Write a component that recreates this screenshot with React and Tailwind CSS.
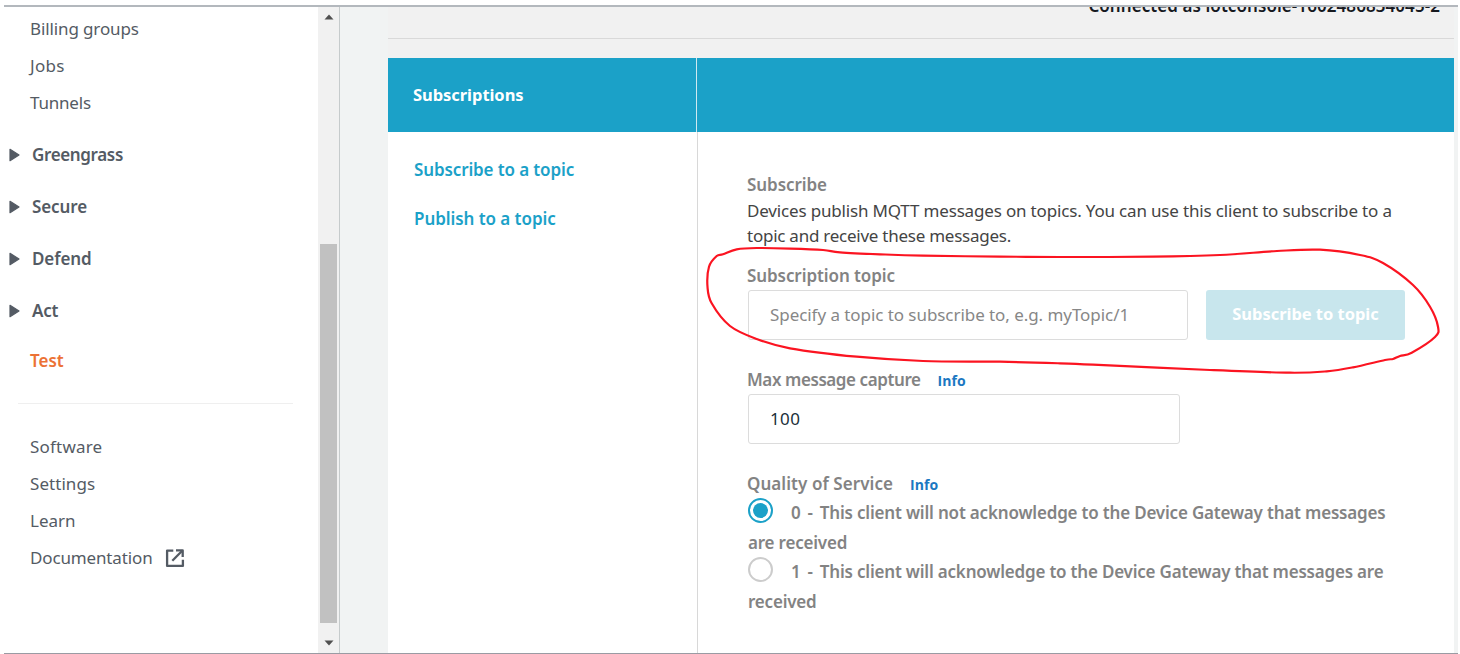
import React from "react";

const devices = [
  ["Billing groups", "tracking-[-0.12px]"],
  ["Jobs", "tracking-[0.26px]"],
  ["Tunnels", "tracking-[-0.2px]"],
];

const groups = [
  ["Greengrass", "tracking-[-0.36px]"],
  ["Secure", "tracking-[-0.1px]"],
  ["Defend", "tracking-[-0.1px]"],
  ["Act", "tracking-[-0.2px]"],
];

const links = [
  ["Software", "tracking-[0.2px]"],
  ["Settings", "tracking-[0.05px]"],
  ["Learn", "tracking-[0px]"],
  ["Documentation", "tracking-[-0.14px]"],
];

const stroke = [
  [756.7, 248], [790, 248.6], [823, 250], [840, 252.3], [880, 254.3], [923, 255.7], [1000, 256.6], [1060, 257],
  [1153, 256.7], [1220, 255], [1277, 251], [1320, 249.7], [1360, 255], [1383, 263], [1413, 285],
  [1430, 306.7], [1438, 326.7], [1435, 337], [1411.7, 352.7], [1400, 356], [1393, 359], [1385, 360],
  [1353, 367.3], [1326.7, 371.3], [1290, 372.7], [1210, 370], [1093, 364.7], [1060, 363.3],
  [1000, 361.7], [923, 361], [856.7, 356.7], [790, 348.3], [756.7, 339], [730, 326], [711.7, 303.3],
  [707.5, 286.7], [709, 266.7], [716.7, 256], [723, 254.3], [736.7, 249.3],
];

// Closed Catmull-Rom curve through the points, as cubic Béziers.
function smooth(pts) {
  const n = pts.length;
  let d = `M${pts[0][0]} ${pts[0][1]}`;
  for (let i = 0; i < n; i++) {
    const a = pts[(i - 1 + n) % n], b = pts[i], c = pts[(i + 1) % n], e = pts[(i + 2) % n];
    d += `C${b[0] + (c[0] - a[0]) / 6} ${b[1] + (c[1] - a[1]) / 6} ${c[0] - (e[0] - b[0]) / 6} ${c[1] - (e[1] - b[1]) / 6} ${c[0]} ${c[1]}`;
  }
  return d + "Z";
}

function ExternalIcon() {
  return (
    <svg className="ml-[12px] size-[20px]" viewBox="0 0 20 20" fill="none" stroke="#545b64" strokeWidth="2.3" strokeLinejoin="round">
      <path d="M8.3 2.6H2.1V17.9H17.9V11.7" />
      <path d="M11 2.3H17.7V9" />
      <path d="M7.3 12.7L17.5 2.5" />
    </svg>
  );
}

function Sidebar() {
  return (
    <nav className="flex w-[314px] flex-col bg-white pt-[3px] text-[#545b64]">
      {devices.map(([t, c]) => (
        <a key={t} className={`ml-[26px] h-[37px] leading-[37px] ${c}`}>{t}</a>
      ))}
      <div className="mt-[8px]">
        {groups.map(([t, c]) => (
          <div key={t} className="flex h-[52px] items-center pl-[5px] font-semibold">
            <svg className="h-[14px] w-[11px]" viewBox="0 0 11 14">
              <path d="M1 1.3L10 7L1 12.7Z" fill="#545b64" stroke="#545b64" strokeWidth="1.2" strokeLinejoin="round" />
            </svg>
            <span className={`ml-[12px] ${c}`}>{t}</span>
          </div>
        ))}
      </div>
      <a className="ml-[26px] mt-[5px] h-[37px] font-semibold leading-[37px] text-[#ec7235]">Test</a>
      <div className="ml-[14px] mt-[24px] h-px w-[275px] bg-[#efefef]" />
      <div className="mt-[24px] flex flex-col">
        {links.map(([t, c]) => (
          <a key={t} className="ml-[26px] flex h-[37px] items-center">
            <span className={c}>{t}</span>
            {t === "Documentation" && <ExternalIcon />}
          </a>
        ))}
      </div>
    </nav>
  );
}

function ScrollBar() {
  return (
    <div className="flex w-[21px] flex-col items-center bg-[#f1f1f1]">
      <svg className="mt-[7px] h-[6px] w-[10px]" viewBox="0 0 10 6"><path d="M0.5 5.5L5 0.5L9.5 5.5Z" fill="#505050" /></svg>
      <div className="mt-[224px] h-[379px] w-[17px] bg-[#c1c1c1]" />
      <svg className="mt-[17px] h-[6px] w-[10px]" viewBox="0 0 10 6"><path d="M0.5 0.5L5 5.5L9.5 0.5Z" fill="#505050" /></svg>
    </div>
  );
}

function Info() {
  return <a className="ml-[17px] font-['Open_Sans'] text-[14px] font-bold tracking-[0.1px] text-[#1b78c2]">Info</a>;
}

function Option({ value, on, first, firstClass, second }) {
  return (
    <label className="block whitespace-nowrap">
      <span className="flex h-[30px] items-center">
        <span className={`mb-[5px] mr-[18px] flex size-[25px] items-center justify-center rounded-full border-[2.5px] ${on ? "border-[#1ba1c8]" : "border-[#cccccc]"}`}>
          {on && <span className="size-[15px] rounded-full bg-[#1ba1c8]" />}
        </span>
        <span className="whitespace-pre tracking-[1.2px]">{value} - </span>
        <span className={firstClass}>{first}</span>
      </span>
      <span className="block h-[29px] leading-[30px] tracking-[-0.2px]">{second}</span>
    </label>
  );
}

function SubscribeForm() {
  return (
    <div className="flex flex-1 flex-col pl-[50px] pt-[40px] font-semibold text-[#838383]">
      <div className="-ml-px h-[27px] leading-[25px] tracking-[-0.07px]">Subscribe</div>
      <p className="-ml-px whitespace-nowrap font-normal leading-[24.5px] text-[#444444]">
        <span className="tracking-[-0.17px]">Devices publish MQTT messages on topics. You can use this client to subscribe to a</span>
        <br />
        <span className="tracking-[-0.25px]">topic and receive these messages.</span>
      </p>
      <div className="-ml-px mt-[16px] leading-[24px] tracking-[-0.08px]">Subscription topic</div>
      <div className="mt-[2px] flex gap-[18px]">
        <div className="flex h-[50px] w-[440px] items-center rounded-[3px] border border-[#dcdcdc] pl-[21px] font-normal tracking-[-0.06px] text-[#878787]">
          Specify a topic to subscribe to, e.g. myTopic/1
        </div>
        <button className="h-[50px] w-[199px] rounded-[3px] bg-[#c8e6ed] pb-[2px] text-[16.5px] font-bold tracking-[-0.03px] text-white">Subscribe to topic</button>
      </div>
      <div className="-ml-px mt-[28px] leading-[24px]"><span className="tracking-[-0.42px]">Max message capture</span><Info /></div>
      <div className="mt-px flex h-[50px] w-[432px] items-center rounded-[3px] border border-[#dcdcdc] pl-[21px] font-normal tracking-[0.4px] text-[#20303a]">100</div>
      <div className="-ml-px mt-[28px] h-[26px] leading-[24px]"><span className="tracking-[0.06px]">Quality of Service</span><Info /></div>
      <Option on value="0" first="This client will not acknowledge to the Device Gateway that messages" firstClass="tracking-[-0.19px]" second="are received" />
      <Option value="1" first="This client will acknowledge to the Device Gateway that messages are" firstClass="tracking-[-0.2px]" second="received" />
    </div>
  );
}

export default function App() {
  return (
    <div className="relative h-[654px] w-[1460px] overflow-hidden bg-white pl-[4px] pt-[5px] font-['Noto_Sans',sans-serif] text-[17px]">
      <div className="flex h-[649px] w-[1454px] overflow-hidden border-b border-t-2 border-b-[#9a9ba3] border-t-[#b3b8bd]">
        <Sidebar />
        <ScrollBar />
        <div className="w-px bg-[#c6cbcc]" />
        <div className="flex flex-1 flex-col bg-[#f1f3f3] pl-[48px] pr-[4px]">
          <header className="flex h-[32px] justify-end overflow-hidden border-b border-[#d9d9d9] bg-[#f1f1f1] pr-[14px]">
            <div className="-mt-[13px] font-semibold leading-[24px] tracking-[0.07px] text-[#16191f]">Connected as iotconsole-1602486834045-2</div>
          </header>
          <div className="h-[19px] bg-[#f1f1f1]" />
          <div className="flex h-[74px] bg-[#1ba1c8] text-white">
            <div className="flex w-[309px] items-center border-r border-[#cfe9f1] pl-[25px] text-[16.5px] font-bold tracking-[-0.05px]">Subscriptions</div>
          </div>
          <div className="flex flex-1 bg-white">
            <div className="flex w-[310px] flex-col border-r border-[#d8d8d8] pl-[26px] pt-[26px] font-semibold text-[#1ba1c8]">
              <a className="h-[49px] leading-[24px] tracking-[-0.12px]">Subscribe to a topic</a>
              <a className="leading-[24px] tracking-[-0.06px]">Publish to a topic</a>
            </div>
            <SubscribeForm />
          </div>
        </div>
      </div>
      <svg className="pointer-events-none absolute left-0 top-0 h-[654px] w-[1460px]" viewBox="0 0 1460 654">
        <path d={smooth(stroke)} fill="none" stroke="#fb1421" strokeWidth="2.2" />
      </svg>
    </div>
  );
}
